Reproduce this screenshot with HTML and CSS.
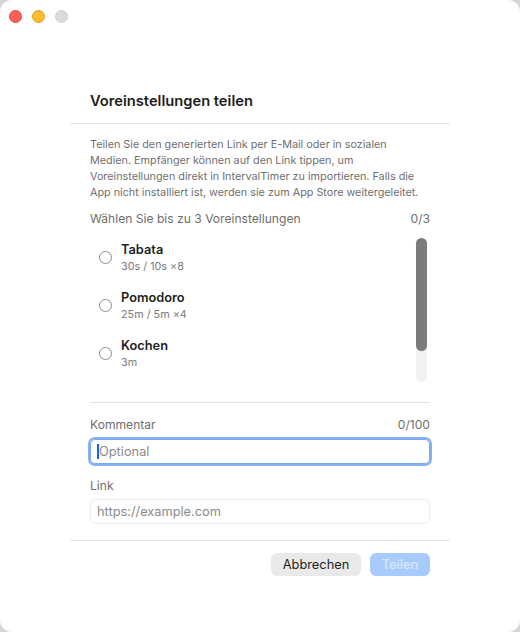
FILE: index.html
```html
<!DOCTYPE html>
<html lang="de">
<head>
  <meta charset="UTF-8">
  <title>Voreinstellungen teilen</title>
  <link rel="stylesheet" href="styles.css">
</head>
<body>
  <div class="fenster">
    <!-- Titelleiste -->
    <div class="titelleiste">
      <span class="ampel rot"></span>
      <span class="ampel gelb"></span>
      <span class="ampel grau"></span>
    </div>

    <div class="dialog">
      <div class="dialog-kopf">
        <h1>Voreinstellungen teilen</h1>
      </div>

      <div class="dialog-inhalt">
        <p class="beschreibung">Teilen Sie den generierten Link per E-Mail oder in sozialen Medien. Empfänger können auf den Link tippen, um Voreinstellungen direkt in IntervalTimer zu importieren. Falls die App nicht installiert ist, werden sie zum App Store weitergeleitet.</p>

        <div class="label-zeile auswahl-label">
          <span>Wählen Sie bis zu 3 Voreinstellungen</span>
          <span>0/3</span>
        </div>

        <div class="liste-wrapper">
          <ul class="liste">
            <li class="eintrag">
              <span class="radio"></span>
              <div>
                <div class="eintrag-titel">Tabata</div>
                <div class="eintrag-info">30s / 10s ×8</div>
              </div>
            </li>
            <li class="eintrag">
              <span class="radio"></span>
              <div>
                <div class="eintrag-titel">Pomodoro</div>
                <div class="eintrag-info">25m / 5m ×4</div>
              </div>
            </li>
            <li class="eintrag">
              <span class="radio"></span>
              <div>
                <div class="eintrag-titel">Kochen</div>
                <div class="eintrag-info">3m</div>
              </div>
            </li>
          </ul>
          <div class="scrollleiste">
            <div class="scroll-daumen"></div>
          </div>
        </div>

        <div class="trenner"></div>

        <div class="label-zeile kommentar-label">
          <span>Kommentar</span>
          <span>0/100</span>
        </div>
        <div class="eingabe aktiv"><span class="cursor"></span><span class="platzhalter">Optional</span></div>

        <div class="label-zeile link-label">
          <span>Link</span>
        </div>
        <div class="eingabe"><span class="platzhalter">https://example.com</span></div>
      </div>

      <div class="dialog-fuss">
        <button class="knopf abbrechen">Abbrechen</button>
        <button class="knopf teilen">Teilen</button>
      </div>
    </div>
  </div>
</body>
</html>
```

FILE: styles.css
```css
* {
  box-sizing: border-box;
}

body {
  margin: 0;
  background-color: #d6d6d6;
  font-family: Inter, "Noto Sans", sans-serif;
  color: #1f1f1f;
}

.fenster {
  width: 520px;
  height: 632px;
  background-color: white;
  border-radius: 12px;
  overflow: hidden;
}

/* Titelleiste */
.titelleiste {
  height: 32px;
  display: flex;
  align-items: center;
  gap: 10px;
  padding-left: 8.5px;
}

.ampel {
  width: 13px;
  height: 13px;
  border-radius: 50%;
}

.rot { background-color: #fe5f57; border: 0.5px solid #e2463f; }
.gelb { background-color: #febc2e; border: 0.5px solid #e1a116; }
.grau { background-color: #dcdcdc; border: 0.5px solid #cfcfcf; }

/* Dialog */
.dialog {
  width: 380px;
  margin-left: 70px;
  margin-top: 59px;
}

.dialog-kopf {
  padding: 0 20px 12px;
  border-bottom: 1px solid #e3e3e3;
}

h1 {
  margin: 0;
  font-size: 14.7px;
  line-height: 20px;
  font-weight: 600;
  color: #1d1d1d;
}

.dialog-inhalt {
  padding: 13px 20px 0;
}

.beschreibung {
  margin: 0;
  font-size: 10.8px;
  line-height: 16px;
  color: #6f6f6f;
}

.label-zeile {
  display: flex;
  justify-content: space-between;
  font-size: 12.1px;
  line-height: 16px;
  color: #6e6e6e;
}

.auswahl-label {
  margin-top: 10px;
}

.liste-wrapper {
  display: flex;
  height: 148px;
  margin-top: 9px;
  overflow: hidden;
}

.liste {
  flex: 1;
  list-style: none;
  margin: 0;
  padding: 0;
}

.eintrag {
  height: 48px;
  display: flex;
  align-items: center;
  gap: 9px;
  padding: 4px 0 10px 9px;
}

.radio {
  width: 13px;
  height: 13px;
  border: 1px solid #8c8c8c;
  border-radius: 50%;
  flex-shrink: 0;
}

.eintrag-titel {
  font-size: 12.8px;
  line-height: 17px;
  font-weight: 600;
  color: #1f1f1f;
}

.eintrag-info {
  font-size: 10.8px;
  line-height: 15px;
  color: #7b7b7b;
  margin-top: 1px;
}

.scrollleiste {
  width: 11px;
  margin: 2px 3px 2px 0;
  background-color: #f1f1f1;
  border-radius: 6px;
}

.scroll-daumen {
  height: 113px;
  background-color: #7b7b7b;
  border-radius: 6px;
}

.trenner {
  height: 1px;
  background-color: #e3e3e3;
  margin-top: 18px;
}

.kommentar-label {
  margin-top: 14px;
}

.eingabe {
  height: 25px;
  margin-top: 6px;
  border: 1px solid #ececec;
  border-radius: 5px;
  display: flex;
  align-items: center;
  padding-left: 6px;
  font-size: 12.8px;
}

.eingabe.aktiv {
  border-color: #7ea9f2;
  box-shadow: 0 0 0 2px #85b0f5;
  border-radius: 5px;
}

.cursor {
  width: 2px;
  height: 15px;
  background-color: #0b63f6;
}

.platzhalter {
  color: #8a8a8a;
}

.link-label {
  margin-top: 14px;
}

.link-label + .eingabe {
  margin-top: 5px;
}

/* Fuss */
.dialog-fuss {
  margin-top: 16px;
  border-top: 1px solid #e3e3e3;
  padding: 12px 20px 0;
  display: flex;
  justify-content: flex-end;
  gap: 9px;
}

.knopf {
  height: 23px;
  border: none;
  border-radius: 6px;
  font-family: Inter, "Noto Sans", sans-serif;
  font-size: 12.8px;
  padding: 0;
}

.abbrechen {
  width: 90px;
  background-color: #e9e9e9;
  color: #1f1f1f;
}

.teilen {
  width: 60px;
  background-color: #a7cbfd;
  color: #d9e8fd;
  font-weight: 500;
}
```
